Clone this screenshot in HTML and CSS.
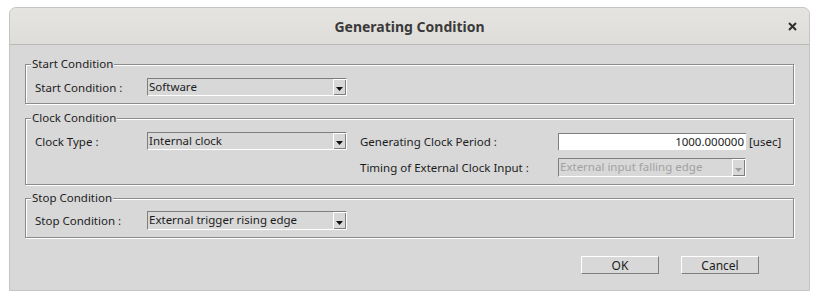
FILE: index.html
```html
<!DOCTYPE html>
<html lang="en">
<head>
    <meta charset="UTF-8">
    <title>Generating Condition</title>
    <link rel="stylesheet" href="styles.css">
</head>
<body>
    <div class="dialog">
        <div class="titlebar">
            <span></span>
            <span class="title">Generating Condition</span>
            <span class="close"><svg width="9" height="9" viewBox="0 0 9 9"><path d="M1 1L8 8M8 1L1 8" /></svg></span>
        </div>

        <div class="content">
            <fieldset class="group">
                <legend>Start Condition</legend>
                <div class="grid">
                    <span class="label">Start Condition :</span>
                    <div class="combo">
                        <span class="combo-text">Software</span>
                        <span class="combo-btn"><svg width="7" height="4" viewBox="0 0 7 4"><polygon points="0,0 7,0 3.5,4" /></svg></span>
                    </div>
                </div>
            </fieldset>

            <fieldset class="group clock">
                <legend>Clock Condition</legend>
                <div class="grid">
                    <span class="label">Clock Type :</span>
                    <div class="combo">
                        <span class="combo-text">Internal clock</span>
                        <span class="combo-btn"><svg width="7" height="4" viewBox="0 0 7 4"><polygon points="0,0 7,0 3.5,4" /></svg></span>
                    </div>
                    <span></span>
                    <span class="label">Generating Clock Period :</span>
                    <div class="edit">1000.000000</div>
                    <span class="unit">[usec]</span>

                    <span></span>
                    <span></span>
                    <span></span>
                    <span class="label">Timing of External Clock Input :</span>
                    <div class="combo disabled tall">
                        <span class="combo-text">External input falling edge</span>
                        <span class="combo-btn"><svg width="7" height="4" viewBox="0 0 7 4"><polygon points="0,0 7,0 3.5,4" /></svg></span>
                    </div>
                    <span></span>
                </div>
            </fieldset>

            <fieldset class="group stop">
                <legend>Stop Condition</legend>
                <div class="grid">
                    <span class="label">Stop Condition :</span>
                    <div class="combo tall">
                        <span class="combo-text">External trigger rising edge</span>
                        <span class="combo-btn"><svg width="7" height="4" viewBox="0 0 7 4"><polygon points="0,0 7,0 3.5,4" /></svg></span>
                    </div>
                </div>
            </fieldset>

            <div class="buttons">
                <button class="btn">OK</button>
                <button class="btn">Cancel</button>
            </div>
        </div>
    </div>
</body>
</html>
```

FILE: styles.css
```css
body {
    margin: 0;
    padding: 0;
    background-color: #ffffff;
    font-family: "Noto Sans", "Open Sans", sans-serif;
    font-size: 11.5px;
    color: #1c1c1c;
}
.dialog {
    width: 799px;
    height: 282px;
    margin: 7px 0 0 9px;
    border: 1px solid #c4c4c4;
    border-radius: 7px 7px 0 0;
    background-color: #d8d8d8;
    overflow: hidden;
}
.titlebar {
    display: grid;
    grid-template-columns: 1fr auto 1fr;
    align-items: center;
    height: 36px;
    border-bottom: 1px solid #bab8b4;
    background: linear-gradient(#e6e4e1, #dfddd9);
}
.title {
    font-size: 14px;
    font-weight: bold;
    color: #3a3a3a;
}
.close {
    display: flex;
    justify-self: end;
    padding-right: 12px;
}
.close svg {
    stroke: #2e2e2e;
    stroke-width: 2;
}
.content {
    padding: 11px 15px 0 15px;
}
.group {
    margin: 0 0 5px 0;
    padding: 0 9px 7px 9px;
    min-width: 0;
    border: 1px solid #8c8c8c;
    box-shadow: 1px 1px 0 #ffffff, inset 1px 1px 0 #ffffff;
}
.group + .group {
    margin-top: 6px;
}
.group legend {
    margin-left: -4px;
    padding: 0 1px;
    line-height: 16px;
    background-color: #d8d8d8;
}
.grid {
    display: grid;
    grid-template-columns: 112px 200px 13px 198px 188px auto;
    align-items: center;
    row-gap: 7px;
    margin-top: 6px;
}
.clock .grid {
    row-gap: 8px;
}
.group.stop {
    margin-top: 5px;
}
.stop .grid {
    margin-top: 5px;
}
.label {
    white-space: nowrap;
}
.combo {
    display: flex;
    align-items: stretch;
    height: 18px;
    box-sizing: border-box;
    border-top: 1px solid #7e7e7e;
    border-left: 1px solid #7e7e7e;
    border-right: 1px solid #ffffff;
    border-bottom: 1px solid #ffffff;
}
.combo.tall {
    height: 19px;
}
.combo-text {
    flex: 1;
    padding-left: 1px;
    line-height: 16px;
    white-space: nowrap;
    overflow: hidden;
}
.combo-btn {
    display: flex;
    align-items: flex-end;
    justify-content: center;
    width: 13px;
    padding-bottom: 4px;
    box-sizing: border-box;
    box-shadow: inset 1px 1px 0 #ffffff, inset -1px -1px 0 #7e7e7e;
}
.combo-btn svg {
    fill: #111111;
}
.combo.disabled .combo-text {
    color: #a2a2a2;
}
.combo.disabled .combo-btn svg {
    fill: #a0a0a0;
}
.edit {
    height: 17px;
    box-sizing: border-box;
    background-color: #ffffff;
    border-top: 1px solid #7e7e7e;
    border-left: 1px solid #7e7e7e;
    text-align: right;
    padding-right: 2px;
    line-height: 15px;
}
.unit {
    padding-left: 3px;
    white-space: nowrap;
}
.buttons {
    display: flex;
    justify-content: flex-end;
    gap: 22px;
    margin-top: 18px;
    padding-right: 35px;
}
.btn {
    width: 78px;
    height: 18px;
    padding: 0;
    font-family: inherit;
    font-size: 12px;
    color: #1c1c1c;
    background-color: #d8d8d8;
    border-top: 1px solid #ffffff;
    border-left: 1px solid #ffffff;
    border-right: 1px solid #7e7e7e;
    border-bottom: 1px solid #7e7e7e;
    line-height: 15px;
}
```
